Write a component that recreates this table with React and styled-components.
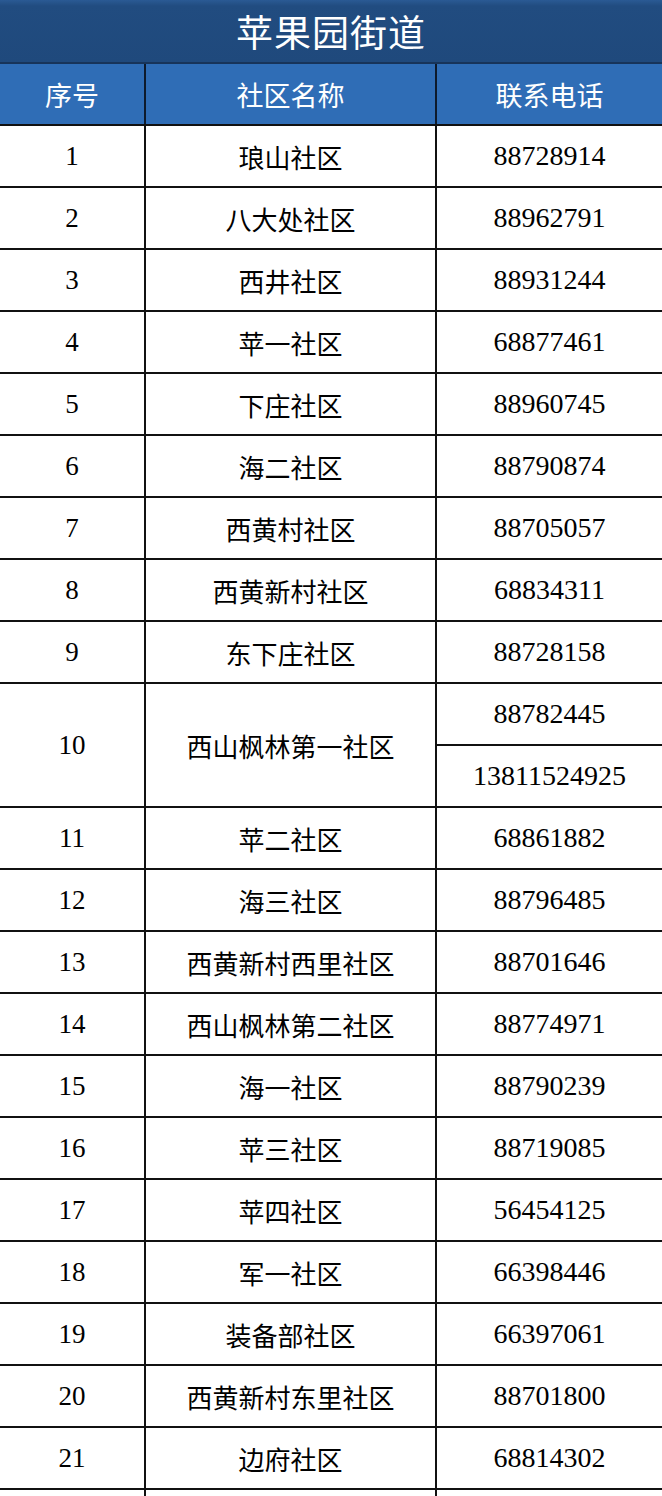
import React from 'react';
import styled, { createGlobalStyle } from 'styled-components';

const GlobalStyle = createGlobalStyle`
  html, body {
    margin: 0;
    padding: 0;
    background: #ffffff;
  }
  body {
    font-family: "Liberation Serif", "Noto Sans CJK SC", serif;
  }
`;

const rows = [
  { no: 1, name: '琅山社区', tel: ['88728914'] },
  { no: 2, name: '八大处社区', tel: ['88962791'] },
  { no: 3, name: '西井社区', tel: ['88931244'] },
  { no: 4, name: '苹一社区', tel: ['68877461'] },
  { no: 5, name: '下庄社区', tel: ['88960745'] },
  { no: 6, name: '海二社区', tel: ['88790874'] },
  { no: 7, name: '西黄村社区', tel: ['88705057'] },
  { no: 8, name: '西黄新村社区', tel: ['68834311'] },
  { no: 9, name: '东下庄社区', tel: ['88728158'] },
  { no: 10, name: '西山枫林第一社区', tel: ['88782445', '13811524925'] },
  { no: 11, name: '苹二社区', tel: ['68861882'] },
  { no: 12, name: '海三社区', tel: ['88796485'] },
  { no: 13, name: '西黄新村西里社区', tel: ['88701646'] },
  { no: 14, name: '西山枫林第二社区', tel: ['88774971'] },
  { no: 15, name: '海一社区', tel: ['88790239'] },
  { no: 16, name: '苹三社区', tel: ['88719085'] },
  { no: 17, name: '苹四社区', tel: ['56454125'] },
  { no: 18, name: '军一社区', tel: ['66398446'] },
  { no: 19, name: '装备部社区', tel: ['66397061'] },
  { no: 20, name: '西黄新村东里社区', tel: ['88701800'] },
  { no: 21, name: '边府社区', tel: ['68814302'] },
];

const App = () => {
  return (
    <>
      <GlobalStyle />
      <Table>
        <colgroup>
          <col style={{ width: 145 }} />
          <col style={{ width: 291 }} />
          <col />
        </colgroup>
        <thead>
          <tr>
            <TitleCell colSpan={3}>苹果园街道</TitleCell>
          </tr>
          <tr>
            <HeadCell>序号</HeadCell>
            <HeadCell>社区名称</HeadCell>
            <HeadCell>联系电话</HeadCell>
          </tr>
        </thead>
        <tbody>
          {rows.map(row =>
            row.tel.map((tel, i) => (
              <tr key={`${row.no}-${i}`}>
                {i === 0 && (
                  <>
                    <NumCell rowSpan={row.tel.length}>{row.no}</NumCell>
                    <NameCell rowSpan={row.tel.length}>{row.name}</NameCell>
                  </>
                )}
                <TelCell>{tel}</TelCell>
              </tr>
            ))
          )}
          <tr>
            <NumCell />
            <NameCell />
            <TelCell />
          </tr>
        </tbody>
      </Table>
    </>
  );
};

export default App;

const Table = styled.table`
  width: 662px;
  border-collapse: collapse;
  table-layout: fixed;
`;

const TitleCell = styled.th`
  height: 62px;
  padding: 0;
  background: linear-gradient(#2a5a94 0, #214c80 6px, #1f497c 100%);
  color: #ffffff;
  font-family: "Noto Sans CJK SC", sans-serif;
  font-size: 37px;
  font-weight: 400;
  letter-spacing: 1px;
  text-align: center;
  border-bottom: 2px solid #17345a;
`;

const HeadCell = styled.th`
  height: 60px;
  padding: 0;
  background: #2f6db6;
  color: #ffffff;
  font-family: "Noto Sans CJK SC", sans-serif;
  font-size: 27px;
  font-weight: 400;
  text-align: center;
  border-right: 2px solid #0d1a2c;
  border-bottom: 2px solid #111111;

  &:last-child {
    border-right: none;
  }
`;

const Cell = styled.td`
  height: 60px;
  padding: 0;
  color: #000000;
  text-align: center;
  vertical-align: middle;
  border-right: 2px solid #111111;
  border-bottom: 2px solid #111111;
`;

const NumCell = styled(Cell)`
  font-family: "Liberation Serif", serif;
  font-size: 27px;
`;

const NameCell = styled(Cell)`
  font-family: "Noto Sans CJK SC", sans-serif;
  font-size: 26px;
`;

const TelCell = styled(Cell)`
  font-family: "Liberation Serif", serif;
  font-size: 28px;
  border-right: none;
`;
